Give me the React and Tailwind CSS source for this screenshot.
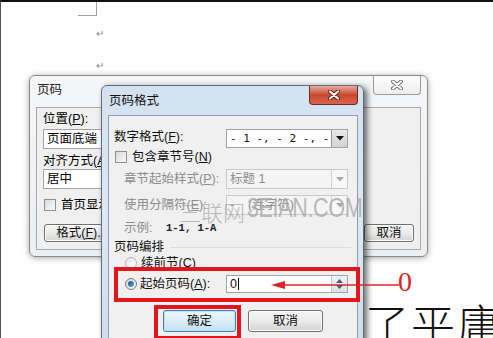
import React from "react";

const Acc = ({ c }) => (
  <>
    (<span className="underline underline-offset-1">{c}</span>)
  </>
);

const Checkbox = () => (
  <div className="w-[12px] h-[12px] border border-[#8e8f8f] bg-gradient-to-br from-[#d9d9d9] to-[#fbfbfb] shrink-0" />
);

const Radio = ({ checked }) => (
  <div
    className={
      "w-[12px] h-[12px] rounded-full border flex items-center justify-center shrink-0 " +
      (checked
        ? "border-[#7a7a7a] bg-gradient-to-br from-[#d6d6d6] to-[#fafafa]"
        : "border-[#b5b5b5] bg-gradient-to-br from-[#e8e8e8] to-[#fdfdfd]")
    }
  >
    {checked && (
      <div className="w-[6px] h-[6px] rounded-full bg-gradient-to-br from-[#15508a] to-[#6aaee6]" />
    )}
  </div>
);

const Arrow = ({ disabled }) => (
  <svg width="8" height="5" viewBox="0 0 8 5">
    <path d="M0 0 L8 0 L4 4.5 Z" fill={disabled ? "#a8a8a8" : "#111"} />
  </svg>
);

const Select = ({ text, disabled, mono }) => (
  <div
    className={
      "w-[122px] h-full border flex items-stretch " +
      (disabled ? "border-[#c9c9c9] bg-[#f4f4f4]" : "border-[#a3a3a3] bg-white")
    }
  >
    <div
      className={
        "flex-1 flex items-center pl-[3px] whitespace-pre overflow-hidden " +
        (disabled ? "text-[#8c8c8c]" : "text-[#111]") +
        (mono ? " font-['DejaVu_Sans_Mono',monospace] text-[11px]" : " text-[12.5px]")
      }
    >
      {text}
    </div>
    <div
      className={
        "w-[16px] flex items-center justify-center border-l " +
        (disabled
          ? "border-[#d0d0d0] bg-[#f7f7f7]"
          : "border-[#9a9a9a] bg-gradient-to-b from-[#e9e9e9] to-[#d2d2d2]")
      }
    >
      <Arrow disabled={disabled} />
    </div>
  </div>
);

const Button = ({ children, def, className = "" }) => (
  <div
    className={
      "rounded-[3px] border flex items-center justify-center text-[12.5px] text-[#111] " +
      (def
        ? "border-[#3c7fb1] bg-gradient-to-b from-[#eef7fc] via-[#dcedf7] to-[#c2e0f2] shadow-[inset_0_0_0_1px_#bfe4f8]"
        : "border-[#707070] bg-gradient-to-b from-[#f4f4f4] via-[#ebebeb] to-[#d3d3d3] shadow-[inset_0_0_0_1px_#fcfcfc]") +
      " " +
      className
    }
  >
    {children}
  </div>
);

const RedClose = () => (
  <div className="w-[49px] h-[19px] rounded-b-[4px] border border-[#6b2a22] border-t-0 bg-gradient-to-b from-[#e6a99c] via-[#c9452f] to-[#d8654c] flex items-center justify-center">
    <svg width="12" height="10" viewBox="0 0 12 10">
      <path d="M2 1.5 L10 8.5 M10 1.5 L2 8.5" stroke="#5b1a10" strokeWidth="4" strokeLinecap="round" />
      <path d="M2 1.5 L10 8.5 M10 1.5 L2 8.5" stroke="#fff" strokeWidth="2.2" strokeLinecap="round" />
    </svg>
  </div>
);

const GrayClose = () => (
  <div className="w-[48px] h-[19px] rounded-b-[4px] border border-[#9a9a9a] border-t-0 bg-gradient-to-b from-[#fdfdfd] to-[#eeeeee] flex items-center justify-center">
    <svg width="12" height="10" viewBox="0 0 12 10">
      <path d="M2 1.5 L10 8.5 M10 1.5 L2 8.5" stroke="#707070" strokeWidth="4" strokeLinecap="round" />
      <path d="M2 1.5 L10 8.5 M10 1.5 L2 8.5" stroke="#fff" strokeWidth="2" strokeLinecap="round" />
    </svg>
  </div>
);

export default function App() {
  return (
    <div className="relative w-[493px] h-[338px] overflow-hidden bg-white border-t-2 border-l border-t-[#111] border-l-[#555] font-['Liberation_Sans','Noto_Sans_CJK_SC',sans-serif] text-[12.5px] leading-none">
      {/* page corner mark */}
      <div className="absolute left-[77px] top-0 w-[19px] h-[14px] border-r border-b border-[#a0a0a0]" />
      {/* paragraph marks */}
      <div className="absolute left-[95px] top-[27px] text-[10px] text-[#8a8a8a]">↵</div>
      <div className="absolute left-[95px] top-[59px] text-[10px] text-[#8a8a8a]">↵</div>

      {/* document text bottom right */}
      <div className="absolute left-[364px] top-[299px] text-[44px] leading-none text-[#111] tracking-[2px] whitespace-nowrap font-['Noto_Sans_CJK_SC',serif] font-light">
        了平庸
      </div>

      {/* back dialog 页码 */}
      <div className="absolute left-[28px] top-[73px] w-[399px] h-[182px] rounded-[6px] border border-[#8a8a8a] bg-gradient-to-b from-[#f4f6f8] to-[#eceff2] shadow-[0_1px_6px_rgba(0,0,0,0.35)] flex flex-col">
        <div className="h-[31px] flex justify-between items-start pl-[7px] pr-[6px]">
          <div className="self-center text-[12.5px] text-[#222] mt-[-3px]">页码</div>
          <GrayClose />
        </div>
        <div className="mx-[6px] h-[143px] border border-[#a9a9a9] bg-[#f0f0f0] flex flex-col">
          <div className="mt-[3px] h-[16px] pl-[6px] flex items-center">
            位置<Acc c="P" />:
          </div>
          <div className="mt-[2px] ml-[6px] w-[140px] h-[20px] border border-[#a3a3a3] bg-white flex items-center pl-[3px]">
            页面底端
          </div>
          <div className="mt-[5px] h-[15px] pl-[6px] flex items-center">
            对齐方式<Acc c="A" />:
          </div>
          <div className="ml-[6px] w-[140px] h-[20px] border border-[#a3a3a3] bg-white flex items-center pl-[3px]">
            居中
          </div>
          <div className="mt-[8px] h-[16px] pl-[7px] flex items-center gap-[5px]">
            <Checkbox />
            <span>首页显示页码</span>
          </div>
          <div className="mt-[11px] h-[18px] pl-[7px] pr-[6px] flex justify-between">
            <Button className="w-[76px]">
              格式<Acc c="F" />...
            </Button>
            <div className="flex gap-[8px]">
              <Button className="w-[50px]">确定</Button>
              <Button className="w-[50px]">取消</Button>
            </div>
          </div>
        </div>
      </div>

      {/* front dialog 页码格式 */}
      <div className="absolute left-[100px] top-[83px] w-[263px] h-[270px] rounded-t-[6px] border border-[#5f6d7d] bg-gradient-to-b from-[#d3e1f0] via-[#dfe8f2] to-[#cfdbe8] shadow-[3px_2px_6px_rgba(0,0,0,0.6)] flex flex-col">
        <div className="h-[29px] flex justify-between items-start pl-[7px] pr-[5px]">
          <div className="self-center text-[12.5px] text-[#111] mt-[1px]">页码格式</div>
          <RedClose />
        </div>
        <div className="ml-[6px] mr-[5px] flex-1 border border-[#8d9cae] bg-[#f0f0f0] flex flex-col text-[#111]">
          {/* row 1 */}
          <div className="mt-[13px] h-[19px] flex">
            <div className="w-[117px] pl-[5px] flex items-center mt-[-3px]">
              数字格式<Acc c="F" />:
            </div>
            <Select text="- 1 -, - 2 -, -" mono />
          </div>
          {/* row 2 */}
          <div className="mt-[1px] h-[16px] pl-[6px] flex items-center gap-[5px]">
            <Checkbox />
            <span>
              包含章节号<Acc c="N" />
            </span>
          </div>
          {/* row 3 */}
          <div className="mt-[4px] h-[20px] flex">
            <div className="w-[117px] pl-[15px] flex items-center text-[#8c8c8c]">
              章节起始样式<Acc c="P" />:
            </div>
            <Select text="标题 1" disabled />
          </div>
          {/* row 4 */}
          <div className="mt-[6px] h-[20px] flex">
            <div className="w-[117px] pl-[15px] flex items-center text-[#8c8c8c]">
              使用分隔符<Acc c="E" />:
            </div>
            <Select text={"-    (连字符)"} disabled />
          </div>
          {/* row 5 */}
          <div className="mt-[5px] h-[16px] pl-[15px] flex items-center">
            <span className="w-[42px] text-[#8c8c8c]">示例:</span>
            <span className="font-['Liberation_Mono',monospace] text-[10.5px] font-bold text-[#222]">1-1, 1-A</span>
          </div>
          {/* row 6 */}
          <div className="mt-[3px] h-[16px] pl-[5px] pr-[6px] flex items-center gap-[6px]">
            <span>页码编排</span>
            <div className="flex-1 border-t border-[#d8dee4]" />
          </div>
          {/* row 7 */}
          <div className="h-[16px] pl-[16px] flex items-center gap-[4px]">
            <Radio />
            <span>
              续前节<Acc c="C" />
            </span>
          </div>
          {/* row 8 */}
          <div className="mt-[4px] h-[18px] flex">
            <div className="w-[117px] pl-[16px] flex items-center gap-[3px]">
              <Radio checked />
              <span>
                起始页码<Acc c="A" />:
              </span>
            </div>
            <div className="w-[122px] h-full border border-[#a3a3a3] bg-white flex items-stretch">
              <div className="flex-1 flex items-center pl-[3px]">
                0<span className="w-px h-[12px] bg-black ml-[1px]" />
              </div>
              <div className="w-[16px] border-l border-[#b8c4cf] bg-gradient-to-b from-[#eef2f6] to-[#d9e1e8] flex flex-col items-center justify-center gap-[2px]">
                <svg width="7" height="4" viewBox="0 0 7 4"><path d="M0 4 L7 4 L3.5 0 Z" fill="#4a5a6a" /></svg>
                <svg width="7" height="4" viewBox="0 0 7 4"><path d="M0 0 L7 0 L3.5 4 Z" fill="#4a5a6a" /></svg>
              </div>
            </div>
          </div>
          {/* row 9 */}
          <div className="mt-[17px] h-[22px] pl-[54px] flex gap-[12px]">
            <Button def className="w-[73px]">确定</Button>
            <Button className="w-[75px]">取消</Button>
          </div>
        </div>
      </div>

      {/* watermark */}
      <div className="absolute left-[178px] top-[193px] flex items-end gap-[2px] text-[#a8a8a8]/80 pointer-events-none">
        <span className="text-[22px] font-['Noto_Sans_CJK_SC',sans-serif] font-light leading-none">三联网</span>
        <span className="text-[27px] font-['Liberation_Sans',sans-serif] leading-none scale-x-[0.8] origin-left tracking-[-0.5px]">3EIAN.COM</span>
      </div>

      {/* red annotations */}
      <div className="absolute left-[113px] top-[265px] w-[246px] h-[35px] border-4 border-[#e3141c]" />
      <div className="absolute left-[153px] top-[303px] w-[87px] h-[35px] border-4 border-[#e3141c]" />
      <svg className="absolute left-[268px] top-[277px]" width="132" height="12" viewBox="0 0 132 12">
        <path d="M14 6 L130 6" stroke="#d8262c" strokeWidth="1.5" />
        <path d="M2 6 L16 2 L16 10 Z" fill="#d8262c" />
      </svg>
      <div className="absolute left-[397px] top-[266px] text-[28px] leading-none text-[#d8262c] font-['Liberation_Serif',serif]">
        0
      </div>
    </div>
  );
}
